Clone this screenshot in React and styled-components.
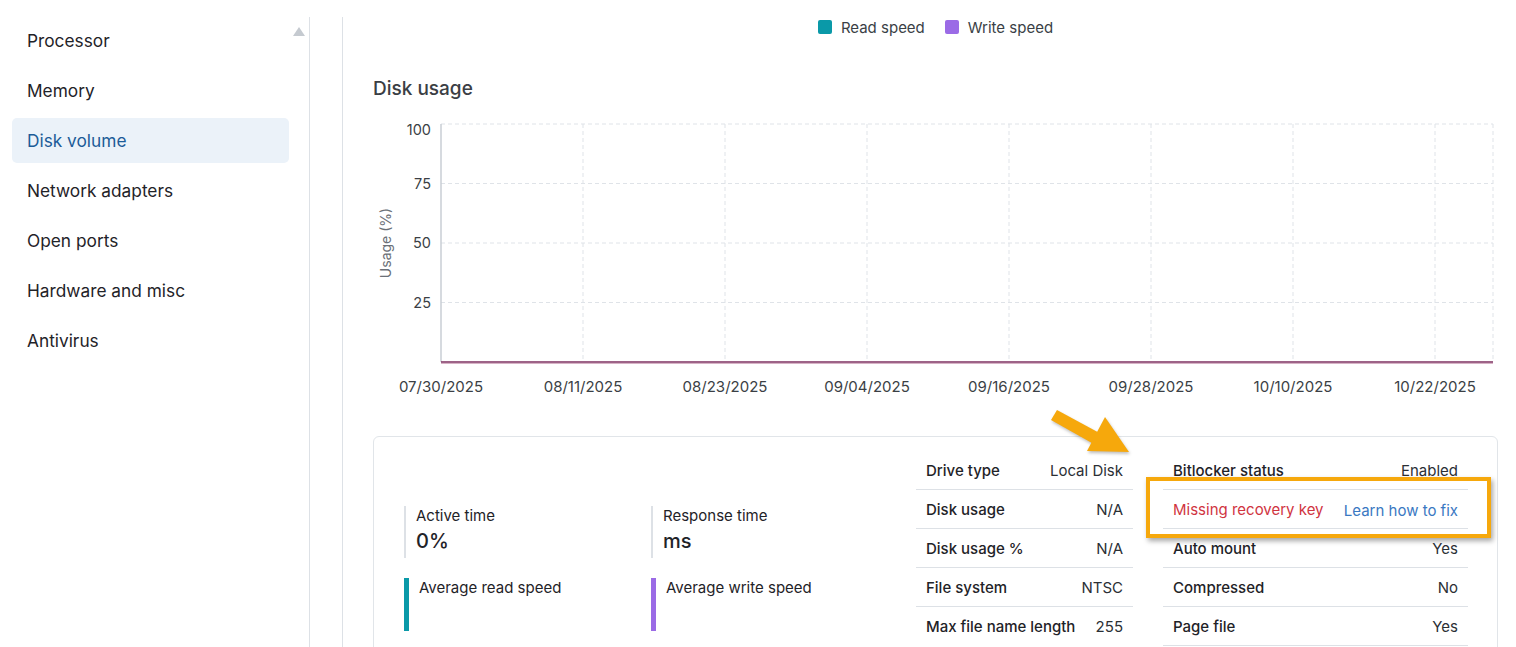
import React from 'react'
import styled, { createGlobalStyle } from 'styled-components'

const GlobalStyle = createGlobalStyle`
  body {
    margin: 0;
    background: #fff;
    font-family: Inter, "Noto Sans", sans-serif;
    color: #1f2328;
  }
`

const navItems = ['Processor', 'Memory', 'Disk volume', 'Network adapters', 'Open ports', 'Hardware and misc', 'Antivirus']

const ticksY = [100, 75, 50, 25]
const datesX = ['07/30/2025', '08/11/2025', '08/23/2025', '09/04/2025', '09/16/2025', '09/28/2025', '10/10/2025', '10/22/2025']

const driveRows = [
  ['Drive type', 'Local Disk'],
  ['Disk usage', 'N/A'],
  ['Disk usage %', 'N/A'],
  ['File system', 'NTSC'],
  ['Max file name length', '255'],
]

const statusRows = [
  ['Auto mount', 'Yes'],
  ['Compressed', 'No'],
  ['Page file', 'Yes'],
]

function UsageChart() {
  // plot box inside the svg
  const left = 68, right = 1120, top = 14, bottom = 252
  const rowH = (bottom - top) / 4
  const colW = 142
  return (
    <svg width="1125" height="290" viewBox="0 0 1125 290">
      {ticksY.map((t, i) => (
        <g key={t}>
          <line x1={left} x2={right} y1={top + i * rowH} y2={top + i * rowH} stroke="#dfe3e8" strokeDasharray="4 3" />
          <text x={58} y={top + i * rowH + (i === 0 ? 11 : 5)} textAnchor="end" fontSize="14.5" fill="#3b3f45" fontFamily="Inter, sans-serif">{t}</text>
        </g>
      ))}
      {datesX.map((d, i) => (
        <g key={d}>
          {i > 0 && <line x1={left + i * colW} x2={left + i * colW} y1={top} y2={bottom} stroke="#dfe3e8" strokeDasharray="4 3" />}
          <text x={left + i * colW} y={282} textAnchor="middle" fontSize="15" fill="#3b3f45" fontFamily="Inter, sans-serif">{d}</text>
        </g>
      ))}
      <line x1={right} x2={right} y1={top} y2={bottom} stroke="#dfe3e8" strokeDasharray="4 3" />
      <line x1={left} x2={left} y1={top} y2={bottom} stroke="#c9ced4" strokeWidth="1.5" />
      <line x1={left} x2={right} y1={bottom + 1.5} y2={bottom + 1.5} stroke="#d7b3c6" strokeWidth="1" />
      <line x1={left} x2={right} y1={bottom} y2={bottom} stroke="#7d2f5f" strokeWidth="1.6" />
      <text x={18} y={133} transform="rotate(-90 18 133)" textAnchor="middle" fontSize="14" fill="#6b7077" fontFamily="Inter, sans-serif">Usage (%)</text>
    </svg>
  )
}

export default function App() {
  return (
    <>
      <GlobalStyle />
      <Page>
        <Sidebar>
          <ScrollUp />
          {navItems.map((n) => (
            <NavItem key={n} $active={n === 'Disk volume'}>{n}</NavItem>
          ))}
        </Sidebar>
        <Main>
          <Legend>
            <LegendItem><Swatch $color="#0a99a8" />Read speed</LegendItem>
            <LegendItem><Swatch $color="#9b6be6" />Write speed</LegendItem>
          </Legend>
          <Title>Disk usage</Title>
          <UsageChart />
          <CardWrap>
            <Arrow width="92" height="60" viewBox="0 0 92 60">
              <g fill="#f6a80c" style={{ filter: 'drop-shadow(1px 2px 1.5px rgba(0,0,0,0.25))' }}>
                <polygon points="1,7 7,-3 55,23 49,34" transform="translate(0,8)" />
                <polygon points="37,46 55,12 79,47" />
              </g>
            </Arrow>
            <Card>
              <Stats>
                <StatBlock>
                  <StatLabel>Active time</StatLabel>
                  <StatValue>0%</StatValue>
                </StatBlock>
                <StatBlock>
                  <StatLabel>Response time</StatLabel>
                  <StatValue>ms</StatValue>
                </StatBlock>
                <SpeedBlock $color="#0a99a8">
                  <StatLabel>Average read speed</StatLabel>
                </SpeedBlock>
                <SpeedBlock $color="#9b6be6">
                  <StatLabel>Average write speed</StatLabel>
                </SpeedBlock>
              </Stats>
              <Table $w="217px" $lastLine={false}>
                {driveRows.map(([k, v]) => (
                  <Row key={k}>
                    <Key>{k}</Key>
                    <Val>{v}</Val>
                  </Row>
                ))}
              </Table>
              <Table $w="305px" $lastLine>
                <Row>
                  <Key>Bitlocker status</Key>
                  <Val>Enabled</Val>
                </Row>
                <Row>
                  <Warn>Missing recovery key</Warn>
                  <FixLink href="#">Learn how to fix</FixLink>
                </Row>
                {statusRows.map(([k, v]) => (
                  <Row key={k}>
                    <Key>{k}</Key>
                    <Val>{v}</Val>
                  </Row>
                ))}
              </Table>
              <Highlight />
            </Card>
          </CardWrap>
        </Main>
      </Page>
    </>
  )
}

const Page = styled.div`
  display: flex;
  padding-top: 17px;
  min-height: 700px;
`

const Sidebar = styled.nav`
  position: relative;
  width: 277px;
  padding: 1px 20px 0 12px;
  border-right: 1px solid #dde1e6;
  display: flex;
  flex-direction: column;
  gap: 5px;
`

const ScrollUp = styled.span`
  position: absolute;
  top: 10px;
  right: 4px;
  width: 0;
  height: 0;
  border-left: 6px solid transparent;
  border-right: 6px solid transparent;
  border-bottom: 9px solid #c5cad0;
`

const NavItem = styled.div`
  height: 45px;
  display: flex;
  align-items: center;
  padding-left: 15px;
  border-radius: 5px;
  font-size: 17.3px;
  color: ${(p) => (p.$active ? '#1b5c98' : '#1f2328')};
  background: ${(p) => (p.$active ? '#ebf2f9' : 'transparent')};
`

const Main = styled.main`
  flex: 1;
  margin-left: 32px;
  border-left: 1px solid #dde1e6;
  padding: 0 18px 0 30px;
  display: flex;
  flex-direction: column;
`

const Legend = styled.div`
  height: 20px;
  display: flex;
  justify-content: center;
  align-items: center;
  gap: 20px;
`

const LegendItem = styled.span`
  display: flex;
  align-items: center;
  gap: 9px;
  font-size: 15px;
  color: #3a3f46;
`

const Swatch = styled.span`
  width: 14px;
  height: 14px;
  border-radius: 2px;
  background: ${(p) => p.$color};
`

const Title = styled.h2`
  margin: 39px 0 8px;
  font-size: 19px;
  line-height: 26px;
  font-weight: 500;
  color: #3a3e44;
`

const CardWrap = styled.div`
  position: relative;
  margin-top: 36px;
`

const Arrow = styled.svg`
  position: absolute;
  left: 677px;
  top: -31px;
  z-index: 2;
`

const Card = styled.section`
  position: relative;
  border: 1px solid #e1e5e9;
  border-radius: 6px;
  padding: 15px 29px 40px 30px;
  display: flex;
  align-items: flex-start;
`

const Stats = styled.div`
  flex: 1;
  display: grid;
  grid-template-columns: 247px 1fr;
  row-gap: 20px;
  padding-top: 54px;
`

const StatBlock = styled.div`
  border-left: 2px solid #dde1e6;
  padding: 0 0 0 10px;
  height: 52px;
`

const StatLabel = styled.div`
  font-size: 15px;
  line-height: 20px;
  color: #1f2328;
`

const StatValue = styled.div`
  font-size: 20px;
  line-height: 30px;
  font-weight: 500;
  color: #1f2328;
`

const SpeedBlock = styled.div`
  border-left: 5px solid ${(p) => p.$color};
  padding-left: 10px;
  height: 53px;
`

const Table = styled.div`
  width: ${(p) => p.$w};
  margin-left: 15px;
  & + & {
    margin-left: 30px;
  }
  & > div:first-child {
    height: 37px;
  }
  & > div:last-child {
    border-bottom-color: ${(p) => (p.$lastLine ? '#dde1e6' : 'transparent')};
  }
`

const Row = styled.div`
  height: 38px;
  border-bottom: 1px solid #dde1e6;
  display: flex;
  align-items: center;
  justify-content: space-between;
  padding: 0 10px;
  font-size: 15px;
`

const Key = styled.span`
  font-weight: 500;
  color: #1f2328;
`

const Val = styled.span`
  color: #2b2f35;
`

const Warn = styled.span`
  color: #d0343f;
`

const FixLink = styled.a`
  color: #3a78c2;
  text-decoration: none;
  padding-top: 3px;
`

const Highlight = styled.div`
  position: absolute;
  left: 772px;
  top: 40px;
  width: 337px;
  height: 53px;
  border: 4px solid #f6a80c;
  box-shadow: 2px 3px 5px rgba(0, 0, 0, 0.35);
  pointer-events: none;
`
